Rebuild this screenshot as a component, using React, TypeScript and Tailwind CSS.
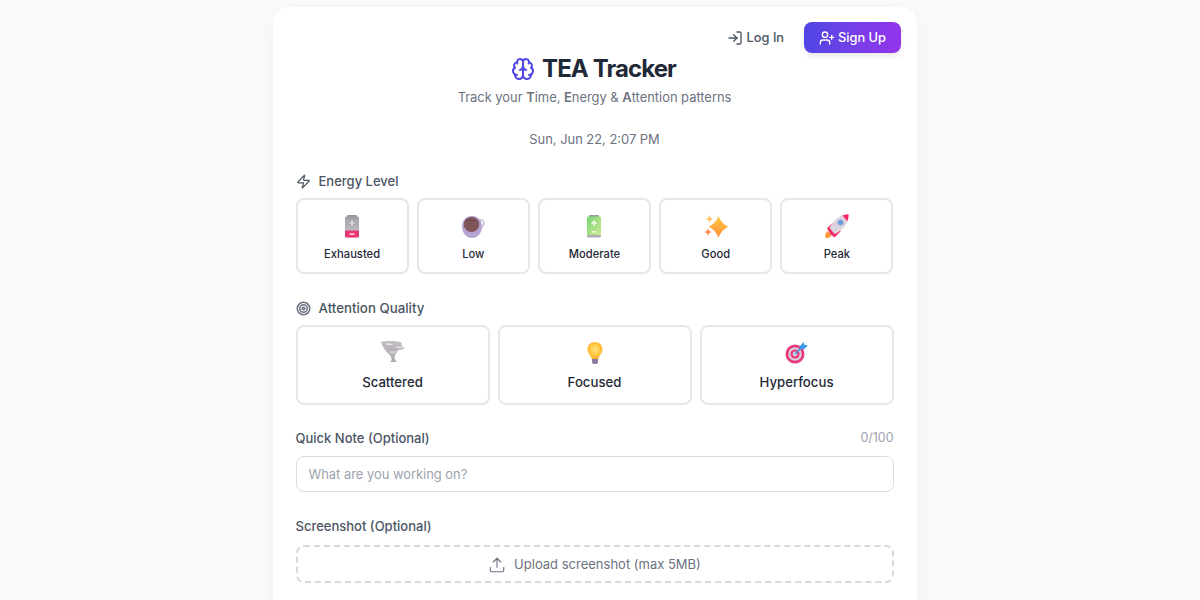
import React from 'react';
import { Brain, LogIn, Target, Upload, UserPlus, Zap } from 'lucide-react';

const BatteryLow = () => (
  <svg width="24" height="24" viewBox="0 0 24 24">
    <defs>
      <linearGradient id="batLow" x1="0" y1="0" x2="0" y2="1">
        <stop offset="0" stopColor="#a19da5" />
        <stop offset="1" stopColor="#cac6cd" />
      </linearGradient>
    </defs>
    <rect x="7" y="1" width="10" height="4" rx="1" fill="#9a979c" />
    <rect x="5" y="2.500" width="14" height="21" rx="1.500" fill="url(#batLow)" />
    <path d="M5 16.500h14v5.500a1.500 1.500 0 0 1-1.500 1.500h-11A1.500 1.500 0 0 1 5 22z" fill="#ea3570" />
    <path d="M11 6.500h2v1.500h1.500v2H13v1.500h-2V10H9.500V8H11z" fill="#d8d4dc" />
    <rect x="9.500" y="19.300" width="5" height="1.600" fill="#ffd0dd" />
  </svg>
);

const Coffee = () => (
  <svg width="24" height="24" viewBox="0 0 24 24">
    <path d="M17 6.500c3-1.500 5.500-.5 5.800 2 .3 2.800-2 5-5 6" fill="none" stroke="#cfc3de" strokeWidth="1.800" />
    <path d="M1 12.500C1 6.500 5 2 11 2s10 4.500 10 10.500c0 6-4 11.500-10 11.500S1 18.500 1 12.500z" fill="#b5a4d0" />
    <ellipse cx="10.500" cy="10.500" rx="7.800" ry="7.500" fill="#80565a" />
    <path d="M4 8.500c2-3.500 10-4.500 13-.5-3-1.500-9-1.500-13 .5z" fill="#6d474b" />
  </svg>
);

const BatteryFull = () => (
  <svg width="24" height="24" viewBox="0 0 24 24">
    <defs>
      <linearGradient id="batFull" x1="0" y1="0" x2="1" y2="1">
        <stop offset="0" stopColor="#74d672" />
        <stop offset="1" stopColor="#d3ea94" />
      </linearGradient>
    </defs>
    <rect x="7" y="1" width="10" height="4" rx="1" fill="#9a979c" />
    <rect x="5" y="2.500" width="14" height="20" rx="1.500" fill="url(#batFull)" />
    <rect x="5" y="21" width="14" height="2.500" rx="1" fill="#b0acb5" />
    <path d="M11 6.500h2v1.500h1.500v2H13v1.500h-2V10H9.500V8H11z" fill="#eefae0" />
    <rect x="9.500" y="17" width="5" height="1.600" fill="#eefae0" />
  </svg>
);

const Sparkles = () => (
  <svg width="24" height="24" viewBox="0 0 24 24">
    <defs>
      <linearGradient id="spark" x1="0" y1="0" x2="0" y2="1">
        <stop offset="0" stopColor="#ffc83d" />
        <stop offset="1" stopColor="#ff8f3f" />
      </linearGradient>
    </defs>
    <path d="M14.500 2C16.300 7 19 9.500 24 12.800 19 16 16.300 18.800 14.500 24 12.700 18.800 10 16 5 12.800 10 9.500 12.700 7 14.500 2z" fill="url(#spark)" />
    <path d="M5.500 1c.5 2.500 1.500 3.500 4 4-2.500.5-3.500 1.500-4 4-.5-2.500-1.500-3.500-4-4 2.500-.5 3.500-1.500 4-4z" fill="#ffc46a" />
    <path d="M4 14c.5 2.500 1.500 3.500 4 4-2.500.5-3.500 1.500-4 4-.5-2.500-1.500-3.500-4-4 2.500-.5 3.500-1.500 4-4z" fill="#ff8a55" />
  </svg>
);

const Rocket = () => (
  <svg width="24" height="24" viewBox="0 0 24 24">
    <path d="M.6 23.900c-.9-2.800-.2-5.500 2-7l4 3.800c-1 2.600-3.200 3.900-6 3.200z" fill="#ff9a3d" />
    <path d="M2 14.500l6-6 2 8-4.500 3.500z" fill="#f62a66" />
    <path d="M9.500 23.500l6.500-6.500-8-2-3.500 4.500z" fill="#f62a66" />
    <path d="M4.500 14C7.500 7.500 12.500 3 18 1l5 5c-2 6-7 11.500-13.500 14z" fill="#dcd5df" />
    <path d="M17.500 1.500c2-.8 4-1.200 6-1.200.3 2.300-.2 4.700-1.200 6.900z" fill="#f62a66" />
    <circle cx="15.500" cy="8.500" r="2.800" fill="#5fa0ea" stroke="#b7a8c6" strokeWidth=".8" />
  </svg>
);

const Tornado = () => (
  <svg width="24" height="24" viewBox="0 0 24 24">
    <defs>
      <linearGradient id="torn" x1="0" y1="0" x2="0" y2="1">
        <stop offset="0" stopColor="#c2bdc5" />
        <stop offset="1" stopColor="#aba7af" />
      </linearGradient>
    </defs>
    <path d="M0 2c6-1.500 16-1 20.500.5V6L24 7.500c-2 1.800-4.500 2.500-7 2.800-1 2-2.300 3.500-3 5-.7 1.800-.5 3.500.5 5.200l1.500 1.500H9l1.500-1.500c.2-2-.3-3.800-1.500-5.500C6 12.500 2.500 9 0 2z" fill="url(#torn)" />
    <path d="M4 4c3-.8 6-.6 8.500.5-3 .7-6 .5-8.500-.5z" fill="#efedf0" />
    <path d="M13 7c3.500-.8 7-.8 10.500.2-3.500 1.300-7 1.300-10.500-.2z" fill="#e6e4e8" />
    <path d="M8 11c2.500.6 5 .6 7.500 0-.5 1-1 1.700-1.500 2.300-2 .3-3.500.1-4.800-.3z" fill="#d6d3d9" />
  </svg>
);

const Bulb = () => (
  <svg width="24" height="24" viewBox="0 0 24 24">
    <defs>
      <radialGradient id="bulb" cx="0.500" cy="0.450" r="0.600">
        <stop offset="0" stopColor="#ffe48a" />
        <stop offset="0.550" stopColor="#ffc83d" />
        <stop offset="1" stopColor="#ffa52e" />
      </radialGradient>
    </defs>
    <path d="M9 18.500h6V22a2 2 0 0 1-2 2h-2a2 2 0 0 1-2-2z" fill="#8c7ba3" />
    <path d="M12 2c4.300 0 7.500 3.200 7.500 7.300 0 2.500-1.100 4.200-2.300 5.600-1 1.200-1.700 2.500-1.800 4.100H8.600c-.1-1.600-.8-2.900-1.800-4.100C5.600 13.500 4.500 11.800 4.500 9.300 4.500 5.200 7.700 2 12 2z" fill="url(#bulb)" />
  </svg>
);

const Dart = () => (
  <svg width="24" height="24" viewBox="0 0 24 24">
    <circle cx="10" cy="14" r="9.500" fill="#e8397a" />
    <circle cx="10" cy="14" r="6.800" fill="#d9d1de" />
    <circle cx="10" cy="14" r="4.600" fill="#e8397a" />
    <circle cx="10" cy="14" r="2.400" fill="#d9d1de" />
    <path d="M10 14l8-8" stroke="#3f9be8" strokeWidth="1.600" />
    <path d="M14.500 6.500L18.500 2l1 2.800 3.500.7-4.500 4.300-3-.8z" fill="#3f9be8" />
  </svg>
);

const energy = [
  { label: 'Exhausted', icon: <BatteryLow /> },
  { label: 'Low', icon: <Coffee /> },
  { label: 'Moderate', icon: <BatteryFull /> },
  { label: 'Good', icon: <Sparkles /> },
  { label: 'Peak', icon: <Rocket /> },
];

const attention = [
  { label: 'Scattered', icon: <Tornado /> },
  { label: 'Focused', icon: <Bulb /> },
  { label: 'Hyperfocus', icon: <Dart /> },
];

export default function App() {
  return (
    <div className="h-[600px] overflow-hidden bg-[#f8fafc] pr-[11px] pt-[7px] font-['Inter',sans-serif]">
      <div className="relative mx-auto h-[700px] w-[644px] rounded-2xl bg-white px-[23px] pt-[44px] shadow-[0_4px_24px_rgba(15,23,42,0.04)]">
        <div className="absolute right-[15.5px] top-[15px] flex items-center gap-2">
          <button className="flex h-[30px] items-center gap-1 px-3 text-[12.8px] font-medium text-[#4b5563]">
            <LogIn size={16} strokeWidth={2} />
            Log In
          </button>
          <button className="flex h-[31px] items-center gap-[3px] rounded-lg bg-gradient-to-r from-[#4f46e5] to-[#9333ea] px-[15px] text-[12.8px] font-medium text-white shadow-[0_4px_6px_-1px_rgba(0,0,0,0.1)]">
            <UserPlus size={16} strokeWidth={2} />
            Sign Up
          </button>
        </div>

        <div className="flex flex-col items-center">
          <div className="flex h-9 items-center gap-[7px] pr-[2px]">
            <Brain size={24} strokeWidth={2} className="text-[#4f46e5]" />
            <h1 className="text-2xl font-bold tracking-[-0.9px] text-[#1f2937]">TEA Tracker</h1>
          </div>
          <p className="mt-px text-[12.9px] leading-5 text-[#6b7280]">
            Track your <b className="font-semibold">T</b>ime, <b className="font-semibold">E</b>nergy &amp; <b className="font-semibold">A</b>ttention patterns
          </p>
          <p className="mt-[22px] text-[12.9px] leading-5 text-[#6b7280]">Sun, Jun 22, 2:07 PM</p>
        </div>

        <div className="mt-[21px] flex items-center gap-2">
          <Zap size={15} strokeWidth={2} className="text-[#4b5563]" />
          <span className="text-[13px] font-medium leading-5 text-[#4b5563]">Energy Level</span>
        </div>
        <div className="mt-[7px] grid grid-cols-5 gap-2">
          {energy.map((item) => (
            <div key={item.label} className="flex h-[76px] flex-col items-center rounded-lg border-2 border-[#e5e7eb] pt-[14px]">
              {item.icon}
              <span className="mt-2 text-[11.2px] font-medium leading-4 text-[#1f2937]">{item.label}</span>
            </div>
          ))}
        </div>

        <div className="mt-6 flex items-center gap-2">
          <Target size={15} strokeWidth={2.5} className="text-[#6b7280]" />
          <span className="text-[13.3px] font-medium leading-5 text-[#4b5563]">Attention Quality</span>
        </div>
        <div className="mt-[7px] grid grid-cols-3 gap-2">
          {attention.map((item) => (
            <div key={item.label} className="flex h-20 flex-col items-center rounded-lg border-2 border-[#e5e7eb] pt-[13px]">
              {item.icon}
              <span className="mt-2 text-[13.2px] font-medium leading-5 text-[#1f2937]">{item.label}</span>
            </div>
          ))}
        </div>

        <div className="mt-[23px] flex items-center justify-between">
          <label className="text-[13px] font-medium leading-5 text-[#4b5563]">Quick Note (Optional)</label>
          <span className="text-[12.4px] text-[#9ca3af]">0/100</span>
        </div>
        <input
          placeholder="What are you working on?"
          className="mt-2 h-9 w-full rounded-lg border border-[#d8dde6] px-3 text-[12.9px] placeholder:text-[#9ca3af]"
        />

        <label className="mt-6 block text-[13px] font-medium leading-5 text-[#4b5563]">Screenshot (Optional)</label>
        <div className="mt-[9px] flex h-[38px] items-center justify-center gap-2 rounded-lg border-2 border-dashed border-[#d5d9e0] pt-px text-[13px] text-[#6b7280]">
          <Upload size={18} strokeWidth={1.5} />
          Upload screenshot (max 5MB)
        </div>
      </div>
    </div>
  );
}
